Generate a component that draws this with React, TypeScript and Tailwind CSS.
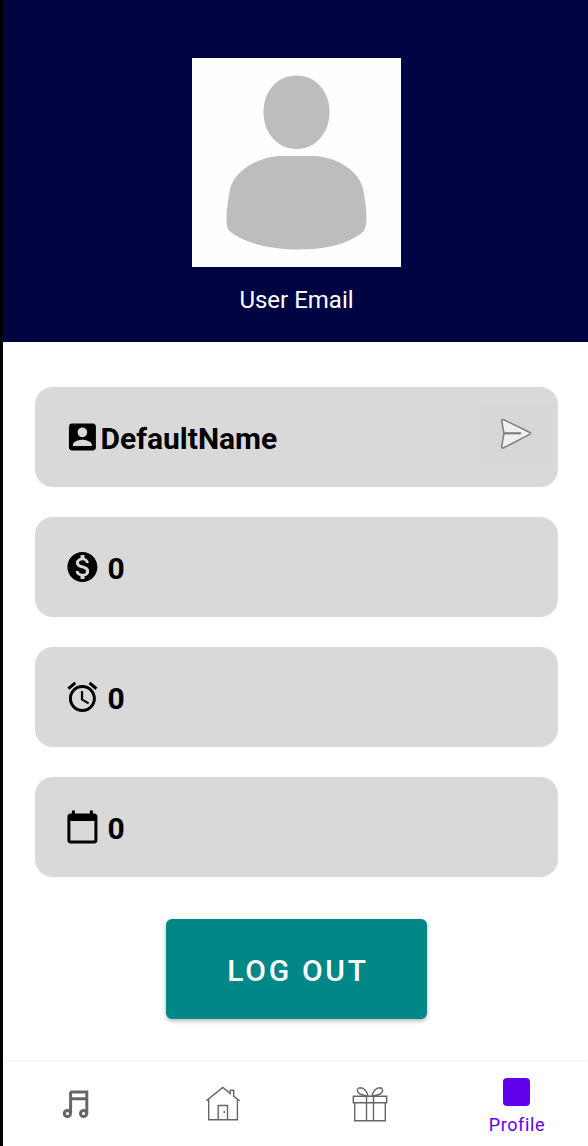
import type { ReactNode } from 'react';

function Material({ d }: { d: string }) {
  return (
    <svg className="size-9 shrink-0" viewBox="0.4 0 24 24" fill="black">
      <path d={d} />
    </svg>
  );
}

const ICONS = {
  account:
    'M3 5v14c0 1.100.89 2 2 2h14c1.100 0 2-.9 2-2V5c0-1.100-.9-2-2-2H5c-1.110 0-2 .9-2 2zm12.200 3.900c0 1.770-1.430 3.200-3.200 3.200s-3.200-1.430-3.200-3.200 1.430-3.200 3.200-3.200 3.200 1.430 3.200 3.200zm-9.500 8.100c0-2.100 4.200-3.200 6.300-3.200s6.300 1.100 6.300 3.200v1H5.700v-1z',
  money:
    'M12 2C6.480 2 2 6.480 2 12s4.480 10 10 10 10-4.480 10-10S17.520 2 12 2zm1.410 16.090V20h-2.670v-1.930c-1.710-.36-3.160-1.460-3.270-3.400h1.960c.1 1.050.82 1.870 2.650 1.870 1.960 0 2.400-.98 2.400-1.590 0-.83-.44-1.610-2.670-2.140-2.480-.6-4.180-1.620-4.180-3.670 0-1.720 1.390-2.840 3.110-3.210V4h2.670v1.950c1.860.45 2.790 1.860 2.850 3.390H14.300c-.05-1.110-.64-1.870-2.220-1.870-1.500 0-2.400.68-2.400 1.640 0 .84.65 1.390 2.670 1.910s4.180 1.390 4.180 3.910c-.01 1.830-1.380 2.830-3.120 3.160z',
  alarm:
    'M22 5.720l-4.600-3.860-1.290 1.530 4.600 3.860L22 5.720zM7.880 3.390L6.600 1.860 2 5.710l1.290 1.530 4.590-3.850zM12.500 8H11v6l4.750 2.850.75-1.230-4-2.370V8zM12 4c-4.970 0-9 4.030-9 9s4.020 9 9 9c4.970 0 9-4.030 9-9s-4.030-9-9-9zm0 16c-3.870 0-7-3.130-7-7s3.130-7 7-7 7 3.130 7 7-3.130 7-7 7z',
  calendar:
    'M20 3h-1V1h-2v2H7V1H5v2H4c-1.100 0-2 .9-2 2v16c0 1.100.9 2 2 2h16c1.100 0 2-.9 2-2V5c0-1.100-.9-2-2-2zm0 18H4V8h16v13z',
};

function Card({ icon, gap, children }: { icon: ReactNode; gap: string; children: ReactNode }) {
  return (
    <div className="flex h-[100px] items-center rounded-[18px] bg-[#d9d9d9] pl-[30px]">
      {icon}
      <div className={`flex flex-1 items-center pt-[5px] ${gap}`}>{children}</div>
    </div>
  );
}

function Avatar() {
  return (
    <svg className="mt-[58px] h-[209px] w-[209px] shrink-0 bg-[#fefefe]" viewBox="0.5 0 209 209" fill="#bcbdbf">
      <path d="M105 17.500C124 17.500 138 33 138 54C138 75 124 91 105 91C86 91 72 75 72 54C72 33 86 17.500 105 17.500Z" />
      <path d="M88 98H123C145 99 169 113 172 133C174 145 175 154 175 162C174 170 174 172 169 176C152 188 130 191.500 107 191.500C83 191.500 56 187 39 174C35 171 35 165 35 160C35 152 37 140 38.500 131C43 113 66 99 88 98Z" />
    </svg>
  );
}

function SendIcon() {
  return (
    <svg className="h-8 w-9" viewBox="0 0 36 32" fill="#f0f0f0" stroke="#7f7f7f" strokeWidth="1.500" strokeLinejoin="round">
      <path d="M4.300 1.500L31 14.500Q32.200 15.300 31 16.100L4.300 30Q2.600 30.500 2.700 28.500L5 15.300L2.700 3Q2.500 1.200 4.300 1.500Z" />
      <path d="M5 15.300H22" strokeWidth="2.200" />
    </svg>
  );
}

function MusicIcon() {
  return (
    <svg className="h-9 w-9" viewBox="0 0 36 36" fill="none" stroke="#666">
      <path d="M12.600 28.500V8.200Q12.600 6.900 13.900 6.900H28.800V28.500M12.600 13.700H28.800" strokeWidth="3" />
      <circle cx="9.400" cy="28.500" r="3.100" strokeWidth="3" />
      <circle cx="25.600" cy="28.500" r="3.100" strokeWidth="3" />
    </svg>
  );
}

function HomeIcon() {
  return (
    <svg className="h-9 w-9" viewBox="0.5 0 36 36" fill="none" stroke="#666" strokeWidth="1.400">
      <path d="M.9 14.700L17.300 1.500L24.700 7.600V4.300H28.200V10.400L34.300 14.700M3.200 13.200V33.800H31.900V13.200M12.700 33.800V19.500H22V33.800M18.700 25V27" />
    </svg>
  );
}

function GiftIcon() {
  return (
    <svg className="h-9 w-9" viewBox="0 0 36 36" fill="none" stroke="#666" strokeWidth="1.400">
      <path d="M1.300 10.300H34.700V16.800H1.300ZM2.700 16.800V34.800H33.300V16.800M14.500 10.300V34.800M21.500 10.300V34.800" />
      <path d="M16 10.200C15.500 6 12.300 1.800 8.500 1.800C5.200 1.900 4.500 4.500 6.400 6.800C8.700 9.400 12.500 9.200 16 10.200ZM20 10.200C20.500 6 23.700 1.800 27.500 1.800C30.800 1.900 31.500 4.500 29.600 6.800C27.300 9.400 23.500 9.200 20 10.200Z" />
    </svg>
  );
}

export default function App() {
  return (
    <div className="flex h-[1146px] w-[588px] flex-col overflow-hidden border-l-[3px] border-black bg-white font-[Roboto,sans-serif]">
      <header className="flex h-[342.400px] shrink-0 flex-col items-center bg-[#000342] pl-px">
        <Avatar />
        <p className="mt-[17px] pl-px text-[24px] leading-8 text-white">User Email</p>
      </header>

      <main className="flex min-h-0 flex-1 flex-col items-center">
        <div className="mt-[44.600px] ml-[1.500px] flex w-[523.500px] flex-col gap-[30px] text-[30px] leading-9 font-bold text-black">
          <Card icon={<Material d={ICONS.account} />} gap="pl-0">
            <span className="flex-1">DefaultName</span>
            <button className="mr-[6px] mb-[10px] flex h-[60px] w-[72px] items-center justify-center rounded-[3px] bg-[#d6d8d7] pl-[2px]">
              <SendIcon />
            </button>
          </Card>
          <Card icon={<Material d={ICONS.money} />} gap="pl-[7px]">0</Card>
          <Card icon={<Material d={ICONS.alarm} />} gap="pl-[7px]">0</Card>
          <Card icon={<Material d={ICONS.calendar} />} gap="pl-[7px]">0</Card>
        </div>
        <button className="mt-[42px] ml-px h-[100px] w-[261px] rounded-[6px] bg-[#018786] pt-[3px] pl-[4px] text-[30px] font-medium tracking-[2.700px] text-white shadow-[0_2px_4px_rgba(0,0,0,0.300)]">
          LOG OUT
        </button>
      </main>

      <nav className="grid h-[85px] shrink-0 grid-cols-4 border-t border-[#f5f5f5] bg-white shadow-[0_-1px_2px_rgba(0,0,0,0.030)]">
        <div className="flex justify-center pt-[22.500px]"><MusicIcon /></div>
        <div className="flex justify-center pt-[24px] pl-[3px]"><HomeIcon /></div>
        <div className="flex justify-center pt-[24px] pl-[2px]"><GiftIcon /></div>
        <div className="flex flex-col items-center pt-[16px] pl-[4px] text-[#6200ee]">
          <div className="h-[28px] w-[27px] rounded-[4px] bg-[#6200ee]" />
          <span className="mt-[6.500px] text-[18px] leading-6 tracking-[0.600px]">Profile</span>
        </div>
      </nav>
    </div>
  );
}
